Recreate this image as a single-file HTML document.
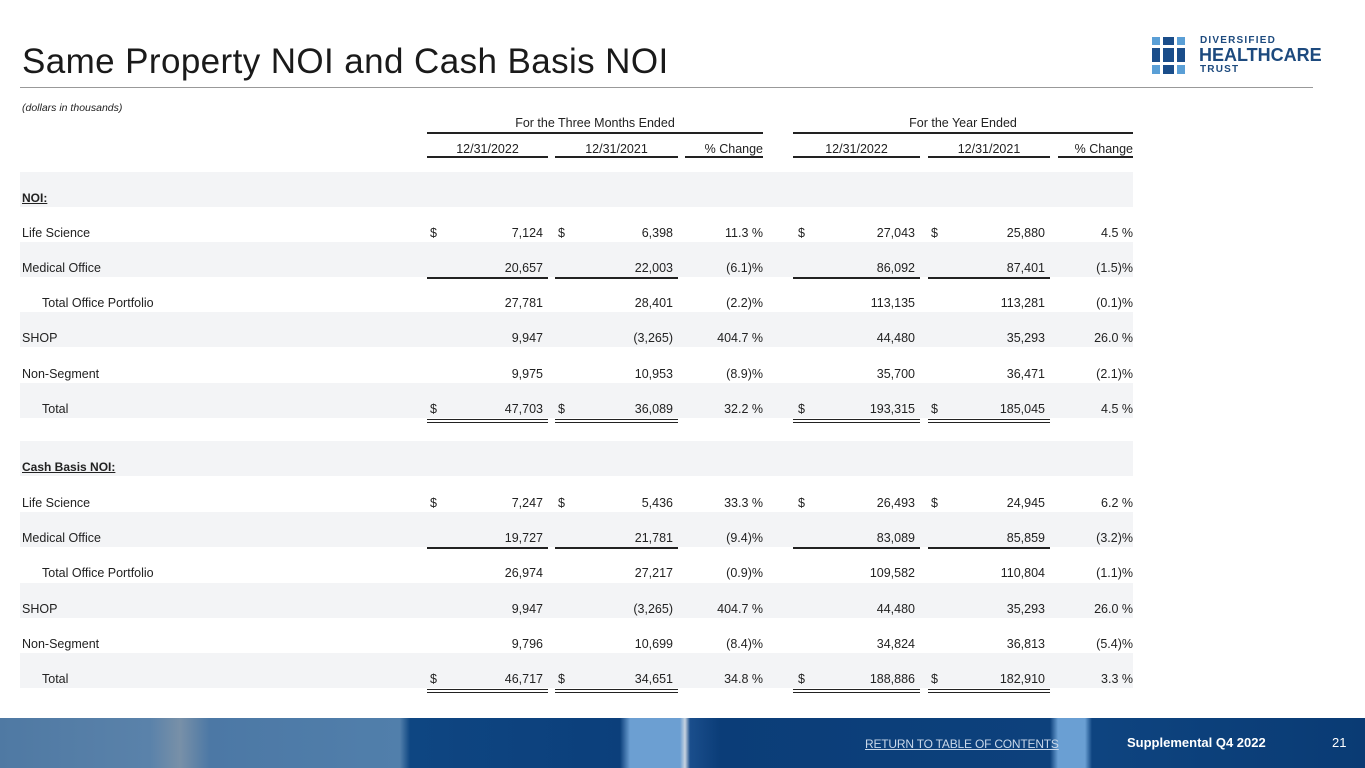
<!DOCTYPE html>
<html><head><meta charset="utf-8"><style>
*{margin:0;padding:0;box-sizing:border-box}
body{width:1365px;height:768px;position:relative;background:#fff;font-family:"Liberation Sans",sans-serif;color:#222;overflow:hidden}
.a{position:absolute;white-space:nowrap}
.t{font-size:12.5px;line-height:14px}
.r{text-align:right}
.band{position:absolute;left:20px;width:1113px;height:35px;background:#f3f4f6}
.ln{position:absolute;height:1.5px;background:#222}
.dl{position:absolute;height:4px;border-top:1.5px solid #222;border-bottom:1.5px solid #222}
</style></head><body>
<div class="a" style="left:22px;top:42px;font-size:35px;color:#1a1a1a;letter-spacing:0.4px">Same Property NOI and Cash Basis NOI</div>
<div class="a" style="left:20px;top:87px;width:1293px;height:1px;background:#999"></div>
<svg class="a" style="left:1150px;top:36px" width="40" height="40">
<rect x="2" y="1" width="8" height="8" fill="#5a9fd6"/><rect x="13" y="1" width="11" height="8" fill="#1a4d8a"/><rect x="27" y="1" width="8" height="8" fill="#5a9fd6"/>
<rect x="2" y="12" width="8" height="14" fill="#1a4d8a"/><rect x="13" y="12" width="11" height="14" fill="#1a4d8a"/><rect x="27" y="12" width="8" height="14" fill="#1a4d8a"/>
<rect x="2" y="29" width="8" height="9" fill="#5a9fd6"/><rect x="13" y="29" width="11" height="9" fill="#1a4d8a"/><rect x="27" y="29" width="8" height="9" fill="#5a9fd6"/>
</svg>
<div class="a" style="left:1200px;top:35px;font-size:10px;font-weight:bold;color:#1d4a7e;letter-spacing:1.2px">DIVERSIFIED</div>
<div class="a" style="left:1199px;top:45px;font-size:18px;font-weight:bold;color:#1d4a7e;letter-spacing:0px">HEALTHCARE</div>
<div class="a" style="left:1200px;top:64px;font-size:10px;font-weight:bold;color:#1d4a7e;letter-spacing:1.2px">TRUST</div>
<div class="a" style="left:22px;top:102px;font-size:10.5px;font-style:italic">(dollars in thousands)</div>

<div class="a t" style="left:427px;width:336px;top:116px;text-align:center">For the Three Months Ended</div>
<div class="ln" style="left:427px;width:336px;top:132px"></div>
<div class="a t" style="left:793px;width:340px;top:116px;text-align:center">For the Year Ended</div>
<div class="ln" style="left:793px;width:340px;top:132px"></div>
<div class="a t" style="left:427px;width:121px;top:142px;text-align:center">12/31/2022</div>
<div class="a t" style="left:555px;width:123px;top:142px;text-align:center">12/31/2021</div>
<div class="a t" style="left:685px;width:78px;top:142px;text-align:right">% Change</div>
<div class="a t" style="left:793px;width:127px;top:142px;text-align:center">12/31/2022</div>
<div class="a t" style="left:928px;width:122px;top:142px;text-align:center">12/31/2021</div>
<div class="a t" style="left:1058px;width:75px;top:142px;text-align:right">% Change</div>
<div class="ln" style="left:427px;width:121px;top:156px"></div><div class="ln" style="left:555px;width:123px;top:156px"></div><div class="ln" style="left:685px;width:78px;top:156px"></div>
<div class="ln" style="left:793px;width:127px;top:156px"></div><div class="ln" style="left:928px;width:122px;top:156px"></div><div class="ln" style="left:1058px;width:75px;top:156px"></div>

<div id="rows"></div>
<div class="a" style="left:0;top:718px;width:1365px;height:50px;background:linear-gradient(90deg,#4f79a3 0,#5a82aa 150px,#7890a8 180px,#4c78a5 210px,#517fab 400px,#0e4682 410px,#0c3f7b 620px,#6c9fd2 630px,#6c9fd2 680px,#c8d4e0 685px,#1a4e8c 690px,#0b3d78 720px,#0d417c 1050px,#6a9fd3 1058px,#6a9fd3 1085px,#0e4480 1092px,#0a3b74 1365px)"></div>
<div class="a" style="left:865px;top:737px;font-size:12px;color:#c9d8ea;text-decoration:underline;letter-spacing:-0.2px">RETURN TO TABLE OF CONTENTS</div>
<div class="a" style="left:1127px;top:735px;font-size:13px;font-weight:bold;color:#fff">Supplemental Q4 2022</div>
<div class="a" style="left:1332px;top:735px;font-size:13px;color:#fff">21</div>
<script>
var data=[
["NOI:",1],["Life Science",0,"7,124","6,398","11.3 %","27,043","25,880","4.5 %",1],["Medical Office",0,"20,657","22,003","(6.1)%","86,092","87,401","(1.5)%",0,1],
["Total Office Portfolio",2,"27,781","28,401","(2.2)%","113,135","113,281","(0.1)%"],["SHOP",0,"9,947","(3,265)","404.7 %","44,480","35,293","26.0 %"],
["Non-Segment",0,"9,975","10,953","(8.9)%","35,700","36,471","(2.1)%",0,1],["Total",2,"47,703","36,089","32.2 %","193,315","185,045","4.5 %",1,2],
["Cash Basis NOI:",1],["Life Science",0,"7,247","5,436","33.3 %","26,493","24,945","6.2 %",1],["Medical Office",0,"19,727","21,781","(9.4)%","83,089","85,859","(3.2)%",0,1],
["Total Office Portfolio",2,"26,974","27,217","(0.9)%","109,582","110,804","(1.1)%"],["SHOP",0,"9,947","(3,265)","404.7 %","44,480","35,293","26.0 %"],
["Non-Segment",0,"9,796","10,699","(8.4)%","34,824","36,813","(5.4)%",0,1],["Total",2,"46,717","34,651","34.8 %","188,886","182,910","3.3 %",1,2]];
var tops=[172,207,242,277,312,348,383,441,477,512,547,583,618,653];
var h='';
data.forEach(function(d,i){var y=tops[i];
 if(i%7%2==0)h+='<div class="band" style="top:'+y+'px"></div>';
 var ty=y+19;
 if(d[1]==1){h+='<div class="a t" style="left:22px;top:'+ty+'px;text-decoration:underline;font-weight:bold;font-size:12px">'+d[0]+'</div>';return;}
 h+='<div class="a t" style="left:'+(d[1]==2?42:22)+'px;top:'+ty+'px">'+d[0]+'</div>';
 if(d[8]){[430,558,798,931].forEach(function(x){h+='<div class="a t" style="left:'+x+'px;top:'+ty+'px">$</div>';});}
 var cols=[[427,121,2],[555,123,3],[685,78,4],[793,127,5],[928,122,6],[1058,75,7]];
 cols.forEach(function(c,k){var pad=(k==2||k==5)?0:5;h+='<div class="a t r" style="left:'+c[0]+'px;width:'+(c[1]-pad)+'px;top:'+ty+'px">'+d[c[2]]+'</div>';
  if(k!=2&&k!=5){if(d[9]==1)h+='<div class="ln" style="left:'+c[0]+'px;width:'+c[1]+'px;top:'+(y+35)+'px"></div>';
  if(d[9]==2)h+='<div class="dl" style="left:'+c[0]+'px;width:'+c[1]+'px;top:'+(y+36)+'px"></div>';}});
});
document.getElementById('rows').innerHTML=h;
</script>
</body></html>
